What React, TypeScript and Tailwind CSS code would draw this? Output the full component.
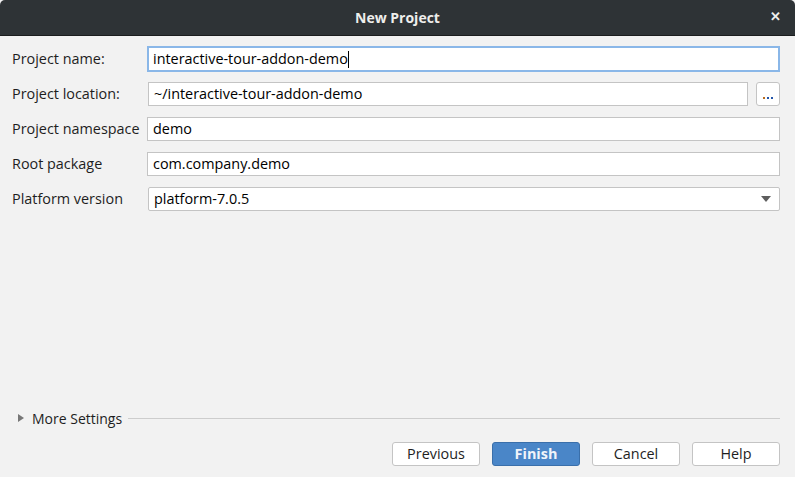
import { useState } from "react";

const font = { fontFamily: '"Open Sans", "Noto Sans", sans-serif' };

function Field({ label, value }: { label: string; value: string }) {
  return (
    <div className="flex items-center h-6">
      <div className="w-[135px] shrink-0 text-[14.4px] text-[#1e1e1e]">{label}</div>
      <div className="flex-1 h-6 bg-white flex items-center px-[5px] text-[14.4px] text-black border border-[#c4c4c4]">
        {value}
      </div>
    </div>
  );
}

export default function App() {
  const [open, setOpen] = useState(false);
  return (
    <div className="w-[795px] h-[477px] flex flex-col bg-[#f2f2f2] overflow-hidden" style={font}>
      {/* title bar */}
      <div className="h-9 shrink-0 bg-[#2e3336] border-b border-[#1b1d1e] rounded-t-[5px] flex items-center justify-center relative">
        <span className="text-[14px] font-bold text-[#eeeeec]">New Project</span>
        <span className="absolute right-[14px] top-[10px] text-[#eeeeec] text-[13px] font-bold leading-none">✕</span>
      </div>

      <div className="flex-1 flex flex-col pl-3 pr-[15px] pt-[11px]">
        <div className="flex flex-col gap-[11px]">
          <div className="flex items-center h-6">
            <div className="w-[135px] shrink-0 text-[14.4px] text-[#1e1e1e]">Project name:</div>
            <div className="flex-1 h-[26px] -my-px bg-white flex items-center px-[4px] text-[14.4px] text-black border-2 border-[#8ab7e8]">
              interactive-tour-addon-demo
              <span className="inline-block w-px h-[17px] bg-black" />
            </div>
          </div>
          <div className="flex items-center h-6">
            <div className="w-[136px] shrink-0 text-[14.4px] text-[#1e1e1e]">Project location:</div>
            <div className="flex-1 h-6 bg-white flex items-center px-[5px] text-[14.4px] text-black border border-[#c4c4c4]">
              ~/interactive-tour-addon-demo
            </div>
            <button className="ml-2 w-6 h-6 bg-white border border-[#c4c4c4] rounded-[3px] flex items-end justify-center pb-[6px] gap-[2px]">
              <span className="w-[2px] h-[2px] bg-[#b86b1e]" />
              <span className="w-[2px] h-[2px] bg-[#2255aa]" />
              <span className="w-[2px] h-[2px] bg-[#2255aa]" />
            </button>
          </div>
          <Field label="Project namespace" value="demo" />
          <Field label="Root package" value="com.company.demo" />
          <div className="flex items-center h-6">
            <div className="w-[136px] shrink-0 text-[14.4px] text-[#1e1e1e]">Platform version</div>
            <div className="flex-1 h-6 bg-white flex items-center justify-between pl-[5px] pr-[8px] text-[14.4px] text-black border border-[#c4c4c4] rounded-[2px]">
              <span>platform-7.0.5</span>
              <svg width="10" height="6" viewBox="0 0 10 6">
                <path d="M0 0 L10 0 L5 6 Z" fill="#5e5e5e" />
              </svg>
            </div>
          </div>
        </div>

        <div className="flex-1" />

        <div className="flex items-center h-5 mb-[14px] ml-[6px]">
          <button onClick={() => setOpen(!open)} className="flex items-center">
            <svg width="6" height="8" viewBox="0 0 6 8" className="mr-2">
              <path d="M0 0 L6 4 L0 8 Z" fill="#777" />
            </svg>
            <span className="text-[14px] text-[#1e1e1e]">More Settings</span>
          </button>
          <div className="flex-1 h-px bg-[#cdcdcd] ml-[6px]" />
        </div>

        <div className="flex justify-end gap-3 mb-[11px]">
          <button className="w-[88px] h-6 bg-white border border-[#c4c4c4] rounded-[3px] text-[14.4px] text-[#1e1e1e]">Previous</button>
          <button className="w-[88px] h-6 bg-[#4a86c8] border border-[#3a6faa] rounded-[3px] text-[14.4px] font-bold text-[#f0f4fa]">Finish</button>
          <button className="w-[88px] h-6 bg-white border border-[#c4c4c4] rounded-[3px] text-[14.4px] text-[#1e1e1e]">Cancel</button>
          <button className="w-[88px] h-6 bg-white border border-[#c4c4c4] rounded-[3px] text-[14.4px] text-[#1e1e1e]">Help</button>
        </div>
      </div>
    </div>
  );
}
